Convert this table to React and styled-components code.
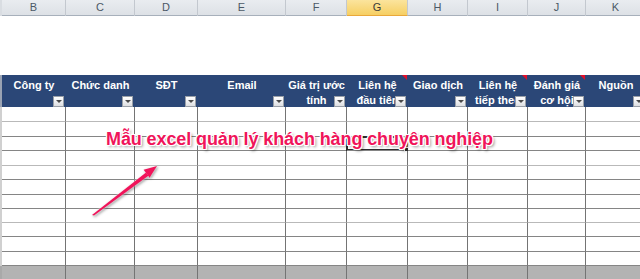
import React from "react";
import styled, { createGlobalStyle, css } from "styled-components";

const GlobalStyle = createGlobalStyle`
  html, body { margin: 0; padding: 0; background: #fff; overflow: hidden; }
  body { font-family: "Liberation Sans", Arial, sans-serif; }
`;

const COLS = "2px 64px 69px 63px 88px 61px 61px 60px 60px 58px 60px";

const Sheet = styled.div`
  position: relative;
  width: 640px;
  height: 279px;
  overflow: hidden;
  background: #fff;
`;

const GridRow = styled.div`
  display: grid;
  grid-template-columns: ${COLS};
  width: 646px;
`;

const LetterBar = styled(GridRow)`
  height: 16px;
  background: linear-gradient(#e9ecf0, #dde1e6);
  border-bottom: 1px solid #a7b0bb;
  box-sizing: border-box;
`;

const Strip = styled.div`
  background: ${(p) => p.$bg || "#d3d3d3"};
`;

const Letter = styled.div`
  box-sizing: border-box;
  border-right: 1px solid #c3c8cf;
  font-size: 11px;
  line-height: 15px;
  text-align: center;
  color: #4b5866;
  ${(p) =>
    p.$active &&
    css`
      background: linear-gradient(#fbe49d, #f6cf63);
      color: #3a3a3a;
      border-bottom: 1px solid #e9a83a;
    `}
`;

const Gap = styled.div`
  height: 59px;
`;

const TableHead = styled(GridRow)`
  height: 32px;
  background: #2b4777;
`;

const HeadCell = styled.div`
  position: relative;
  box-sizing: border-box;
  padding-top: 3px;
  color: #fff;
  font-weight: bold;
  font-size: 11px;
  line-height: 15px;
  text-align: center;
  white-space: nowrap;
  overflow: hidden;
`;

const Line = styled.div`
  white-space: nowrap;
`;

const Drop = styled.span`
  position: absolute;
  right: 2px;
  bottom: 0;
  width: 11px;
  height: 11px;
  box-sizing: border-box;
  background: linear-gradient(#ffffff, #dedfe2);
  border: 1px solid #9aa0a8;
  &::after {
    content: "";
    position: absolute;
    left: 2px;
    top: 3px;
    border-left: 3px solid transparent;
    border-right: 3px solid transparent;
    border-top: 3px solid #4a4a4a;
  }
`;

const Note = styled.span`
  position: absolute;
  right: 1px;
  top: 0;
  width: 0;
  height: 0;
  border-left: 5px solid transparent;
  border-top: 5px solid #e0102a;
`;

const BodyRow = styled(GridRow)`
  height: ${(p) => p.$h}px;
`;

const Cell = styled.div`
  position: relative;
  box-sizing: border-box;
  border-right: 1px solid #747474;
  border-bottom: 1px solid ${(p) => (p.$faint ? "#b9b9b9" : "#858585")};
  background: ${(p) => (p.$grey ? "#b3b3b3" : "#fff")};
  ${(p) =>
    p.$selected &&
    css`
      box-shadow: 0 0 0 1px #2e2e2e, inset 0 0 0 1px #2e2e2e;
      &::after {
        content: "";
        position: absolute;
        right: -3px;
        bottom: -3px;
        width: 4px;
        height: 4px;
        background: #2e2e2e;
        border: 1px solid #fff;
      }
    `}
`;

const Annotation = styled.div`
  position: absolute;
  left: 106px;
  top: 128px;
  font-family: "Liberation Sans", Arial, sans-serif;
  font-weight: bold;
  font-size: 18px;
  line-height: 22px;
  letter-spacing: -0.1px;
  color: #f0145a;
  white-space: nowrap;
  z-index: 3;
  text-shadow: 1px 0 0 #fff, -1px 0 0 #fff, 0 1px 0 #fff, 0 -1px 0 #fff,
    1px 1px 0 #fff, -1px -1px 0 #fff, 1px -1px 0 #fff, -1px 1px 0 #fff,
    2px 2px 3px rgba(0, 0, 0, 0.45);
`;

const ArrowSvg = styled.svg`
  position: absolute;
  left: 85px;
  top: 160px;
  z-index: 3;
  overflow: visible;
  filter: drop-shadow(0 0 1px #fff) drop-shadow(1px 1px 1px rgba(0, 0, 0, 0.4));
`;

const letters = ["B", "C", "D", "E", "F", "G", "H", "I", "J", "K"];

const heads = [
  { lines: ["Công ty"] },
  { lines: ["Chức danh"] },
  { lines: ["SĐT"] },
  { lines: ["Email"] },
  { lines: ["Giá trị ước", "tính"] },
  { lines: ["Liên hệ", "đầu tiên"], note: true },
  { lines: ["Giao dịch"] },
  { lines: ["Liên hệ", "tiếp theo"], note: true },
  { lines: ["Đánh giá", "cơ hội"], note: true },
  { lines: ["Nguồn"], note: true },
];

const rows = [
  { h: 15, faint: true },
  { h: 15 },
  { h: 14, sel: 5 },
  { h: 15, faint: true },
  { h: 14 },
  { h: 15 },
  { h: 14 },
  { h: 14, faint: true },
  { h: 14 },
  { h: 15 },
  { h: 14 },
];

export default function App() {
  return (
    <>
      <GlobalStyle />
      <Sheet>
        <LetterBar>
          <Strip $bg="#d9dde2" />
          {letters.map((l) => (
            <Letter key={l} $active={l === "G"}>
              {l}
            </Letter>
          ))}
        </LetterBar>
        <Gap />
        <TableHead>
          <Strip $bg="#9aa3b3" />
          {heads.map((h, i) => (
            <HeadCell key={i}>
              {h.lines.map((t) => (
                <Line key={t}>{t}</Line>
              ))}
              <Drop />
              {h.note && <Note />}
            </HeadCell>
          ))}
        </TableHead>
        {rows.map((r, ri) => (
          <BodyRow key={ri} $h={r.h}>
            <Strip $bg="#d0d0d0" />
            {letters.map((l, ci) => (
              <Cell key={l} $faint={r.faint} $selected={r.sel === ci} />
            ))}
          </BodyRow>
        ))}
        <BodyRow $h={14}>
          <Strip $bg="#a9a9a9" />
          {letters.map((l) => (
            <Cell key={l} $grey />
          ))}
        </BodyRow>
        <Annotation>Mẫu excel quản lý khách hàng chuyên nghiệp</Annotation>
        <ArrowSvg width="80" height="60" viewBox="0 0 80 60">
          <polygon points="7,55 61,12.6 63.4,15.8 9,55.6" fill="#f0145a" />
          <polygon points="72,6 64.6,17.8 58.6,9.8" fill="#f0145a" />
        </ArrowSvg>
      </Sheet>
    </>
  );
}
